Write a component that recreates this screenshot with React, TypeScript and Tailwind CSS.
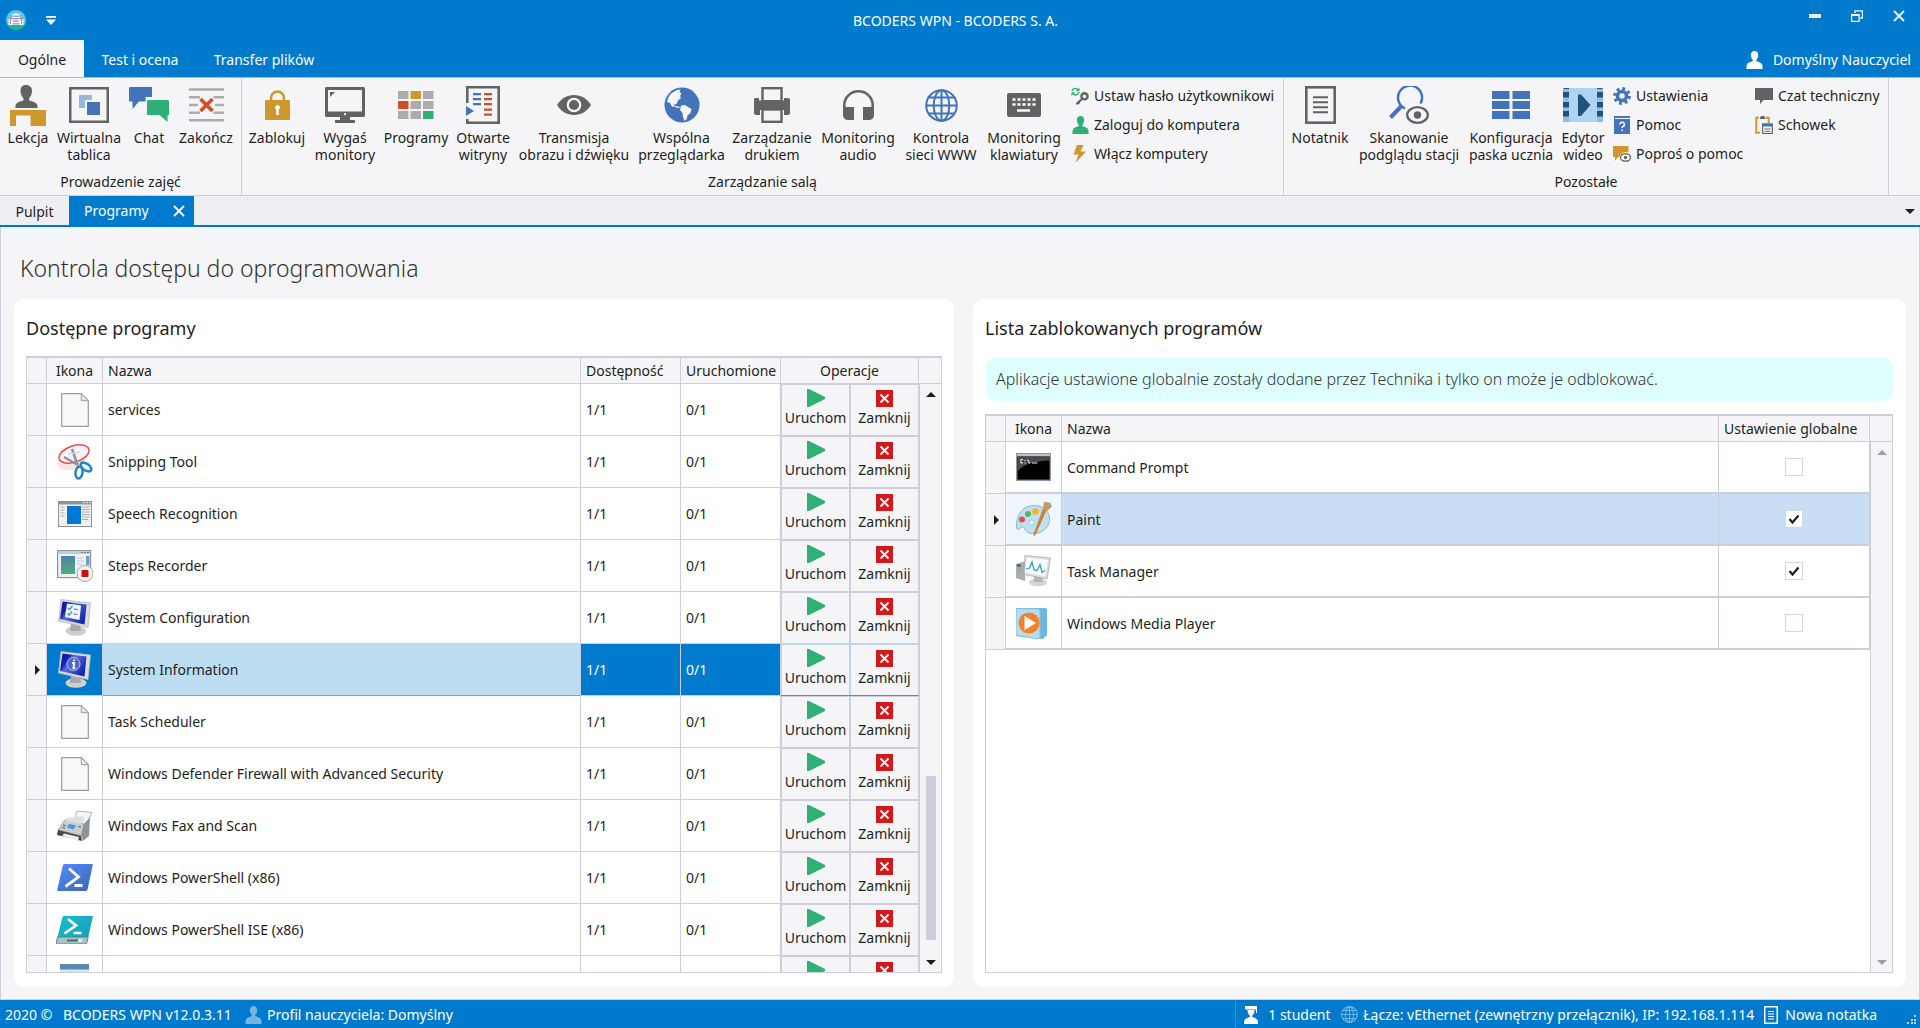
import React from "react";
import type { ReactNode } from "react";

const GRAY = "#636363";
const BLUE = "#4273bb";
const GREEN = "#2fb074";
const RED = "#d04e2c";
const GOLD = "#d0982c";

/* ---------- ribbon icons ---------- */

function LessonIcon() {
  return (
    <svg width="36" height="41" viewBox="0 0 36 41">
      <path d="M16 0c-4 0-5.500 2.500-5.500 6 0 3 1.500 6 3 7.500v2C9 16.500 5.500 18 5.500 21v2h22v-2c0-3-4-4.500-8.500-5.500v-2c1.500-1.500 3-4.500 3-7.500 0-3.500-2-6-6-6z" fill={GRAY} />
      <path d="M13.500 14.500 16.500 19l3-4.500" fill={GRAY} />
      <path d="M0 25h36v16H20.500V30.500H6V41H0z" fill={GOLD} />
    </svg>
  );
}
function BoardIcon() {
  return (
    <svg width="40" height="36" viewBox="0 0 40 36">
      <rect x="1.250" y="1.250" width="37.500" height="33.500" fill="none" stroke={GRAY} strokeWidth="2.500" />
      <path d="M10 8h13v5h-7v8h-6z" fill="#9bb5dc" />
      <rect x="18" y="15" width="13" height="13" fill={BLUE} />
    </svg>
  );
}
function ChatIcon() {
  return (
    <svg width="40" height="36" viewBox="0 0 40 36">
      <path d="M1 0h22v10h-6.500v4.500H10L3.500 22v-7.500H0V1z" fill={BLUE} />
      <path d="M19 13h20l1 1v14h-1.500v7l-8-7H18V14z" fill={GREEN} />
    </svg>
  );
}
function EndIcon() {
  return (
    <svg width="35" height="34" viewBox="0 0 35 34">
      <path d="M0 1.500h35M0 9.200h11M24.500 9.200h10.500M0 17h9M26 17h9M0 24.700h11M24.500 24.700h10.500M0 32.200h35" stroke="#acacac" strokeWidth="2.400" fill="none" />
      <path d="m11.500 11 12 12M23.500 11l-12 12" stroke={RED} strokeWidth="3.600" fill="none" />
    </svg>
  );
}
function LockIcon() {
  return (
    <svg width="25" height="30" viewBox="0 0 25 30">
      <path d="M6 11V8a6.500 6.500 0 0 1 13 0v3" fill="none" stroke={GOLD} strokeWidth="2.500" />
      <rect y="10" width="25" height="20" rx="1" fill={GOLD} />
      <path d="M12.500 15a2.500 2.500 0 0 0-1.300 4.600V25h2.600v-5.400A2.500 2.500 0 0 0 12.500 15z" fill="#fff" />
    </svg>
  );
}
function MonitorIcon() {
  return (
    <svg width="40" height="36" viewBox="0 0 40 36">
      <path fillRule="evenodd" d="M1 0h38l1 1v28l-1 1H1l-1-1V1zM3 3v21.500h34V3z" fill={GRAY} />
      <path d="M5 5h5L5 10z" fill={GRAY} />
      <path d="M15 30h10v3h5v3H10v-3h5z" fill={GRAY} />
      <circle cx="20" cy="27.200" r="1.100" fill="#fff" />
    </svg>
  );
}
function ProgramsIcon() {
  const cells = ["#acacac", GOLD, "#acacac", RED, "#acacac", "#acacac", "#acacac", "#acacac", GREEN];
  return (
    <svg width="36" height="28" viewBox="0 0 36 28">
      {cells.map((c, i) => (
        <rect key={i} x={(i % 3) * 12.500} y={Math.floor(i / 3) * 10} width="10.500" height="8" fill={c} />
      ))}
    </svg>
  );
}
function SitesIcon() {
  return (
    <svg width="34" height="38" viewBox="0 0 34 38">
      <path d="M1.300 17V1.300h31.400v35.400H1.300V33" fill="none" stroke={GRAY} strokeWidth="2.600" />
      <path d="M0 20l8 5-8 5z" fill={BLUE} />
      <path d="M7 8.200h8M7 13.200h8M7 18.200h8" stroke={BLUE} strokeWidth="2.300" />
      <path d="M18 8.200h8M18 13.200h8M18 18.200h8M18 23.700h8M18 28.700h8" stroke={RED} strokeWidth="2.300" />
    </svg>
  );
}
function EyeIcon() {
  return (
    <svg width="34" height="20" viewBox="0 0 34 20">
      <path d="M0 10C4 3.500 10 0 17 0s13 3.500 17 10c-4 6.500-10 10-17 10S4 16.500 0 10z" fill={GRAY} />
      <circle cx="17" cy="10" r="6.200" fill="none" stroke="#f5f5f7" strokeWidth="2.200" />
    </svg>
  );
}
function EarthIcon() {
  return (
    <svg width="36" height="36" viewBox="0 0 36 36">
      <circle cx="18" cy="18" r="17.500" fill={BLUE} />
      <path d="M7 6.500 13 3l3.500-.5-1 2.500 2 1.500-1.500 2.500 1 2-3 2.500-1.500 3.500-2.500.5.500 2.500-2.500-.5-2-3.500L3 15c.5-3 2-6 4-8.500z" fill="#f5f5f7" />
      <path d="M17 18.500l4-.5 3 2 3.500 2-1 4-3 2.500-1 4-2 1.500-1.500-4-.5-4-2.500-3z" fill="#f5f5f7" />
      <path d="M10 18.500l4 1 2 .5-1 1-3-.5z" fill="#f5f5f7" />
    </svg>
  );
}
function PrinterIcon() {
  return (
    <svg width="36" height="36" viewBox="0 0 36 36">
      <path d="M1 11h4v3h25v-3h4l2 1v15l-2 1h-4v-5H6v5H2l-2-1V12z" fill={GRAY} />
      <rect x="8.500" y="1.200" width="19" height="13" fill="#f5f5f7" stroke={GRAY} strokeWidth="2.400" />
      <rect x="5" y="13.500" width="26" height="9.500" fill={GRAY} />
      <rect x="8.500" y="22.500" width="19" height="12.300" fill="#f5f5f7" stroke={GRAY} strokeWidth="2.400" />
    </svg>
  );
}
function HeadphonesIcon() {
  return (
    <svg width="31" height="30" viewBox="0 0 31 30">
      <path d="M1.300 20v-5a14.200 13.700 0 0 1 28.400 0v5" fill="none" stroke={GRAY} strokeWidth="2.600" />
      <path d="M0 17h11v13H6c-4 0-6-2-6-5zM20 17h11v8c0 3-2 5-6 5h-5z" fill={GRAY} />
    </svg>
  );
}
function WebIcon({ size = 33, color = BLUE, stroke = 2 }: { size?: number; color?: string; stroke?: number }) {
  return (
    <svg width={size} height={size} viewBox="0 0 33 33" fill="none" stroke={color} strokeWidth={stroke}>
      <circle cx="16.500" cy="16.500" r="15.300" />
      <ellipse cx="16.500" cy="16.500" rx="7.800" ry="15.300" />
      <path d="M16.500 1v31M1 16.500h31M4 8.500h25M4 24.500h25" />
    </svg>
  );
}
function KeyboardIcon() {
  return (
    <svg width="34" height="24" viewBox="0 0 34 24">
      <rect width="34" height="24" rx="2" fill={GRAY} />
      <path d="M5.500 6.500h23M5.500 11.500h23" stroke="#fff" strokeWidth="2.600" strokeDasharray="3 2" />
      <path d="M10 17.500h13" stroke="#fff" strokeWidth="2.400" />
    </svg>
  );
}
function NotepadIcon() {
  return (
    <svg width="31" height="38" viewBox="0 0 31 38">
      <rect x="1.300" y="1.300" width="28.400" height="35.400" fill="none" stroke={GRAY} strokeWidth="2.600" />
      <path d="M8 11.200h15M8 16.200h15M8 21.200h15M8 26.200h15" stroke={GRAY} strokeWidth="2" />
    </svg>
  );
}
function ScanIcon() {
  return (
    <svg width="40" height="38" viewBox="0 0 40 38">
      <path d="M31.500 17.500A12 12 0 1 0 16 22.500" fill="none" stroke={BLUE} strokeWidth="2.500" />
      <path d="M12.500 20 1.500 31.500" stroke={BLUE} strokeWidth="4" />
      <ellipse cx="28.500" cy="29" rx="10.300" ry="7.800" fill="none" stroke={GRAY} strokeWidth="2.300" />
      <circle cx="28.500" cy="29" r="3.700" fill={GRAY} />
    </svg>
  );
}
function BarConfigIcon() {
  return (
    <svg width="38" height="28" viewBox="0 0 38 28">
      <path d="M0 0h17.500v8H0zM20.500 0H38v8H20.500zM0 10h17.500v8H0zM20.500 10H38v8H20.500zM0 20h17.500v8H0zM20.500 20H38v8H20.500z" fill={BLUE} />
    </svg>
  );
}
function VideoIcon() {
  return (
    <svg width="40" height="34" viewBox="0 0 40 34">
      <rect width="40" height="34" rx="1.500" fill="#b0d3f1" />
      <path d="M0 0h6v34H0zM34 0h6v34h-6z" fill="#8fbde3" />
      <path d="M0 4h6v5.500H0zM0 14h6v5.500H0zM0 23h6v5.500H0zM34 4h6v5.500h-6zM34 14h6v5.500h-6zM34 23h6v5.500h-6zM1.500 0H6v1H0zM34 0h4.500L40 1h-6z" fill="#22527d" />
      <path d="M15 6.500h3L27.500 17 18 28h-3z" fill="#22527d" />
    </svg>
  );
}
function PersonIcon({ color = GREEN }: { color?: string }) {
  return (
    <svg width="17" height="18" viewBox="0 0 17 18">
      <path d="M8.500 0C6 0 4.800 1.700 4.800 4c0 2 1 4 2 5v1L3 11.500C1 12.300.5 14 .5 16v2h16v-2c0-2-.5-3.700-2.500-4.500L10.200 10V9c1-1 2-3 2-5 0-2.300-1.200-4-3.700-4z" fill={color} />
    </svg>
  );
}
function KeyIcon() {
  return (
    <svg width="18" height="18" viewBox="0 0 18 18">
      <path d="M1 4a3.300 3.300 0 0 1 6-1M8 5a3.300 3.300 0 0 1-6 1.500" fill="none" stroke={GREEN} strokeWidth="1.500" />
      <path d="M8.500.5v3.700H5zM.5 9V5.300H4z" fill={GREEN} />
      <circle cx="13.500" cy="9.300" r="3.100" fill="none" stroke={GRAY} strokeWidth="2.400" />
      <path d="M11.300 11.500 5.500 17.200M6.500 14.500l2 2" stroke={GRAY} strokeWidth="2.200" />
    </svg>
  );
}
function BoltIcon() {
  return (
    <svg width="18" height="18" viewBox="0 0 18 18">
      <path d="M6 0h6.500L9.500 6.500H15L4.500 18l3-8.500H2.500z" fill={GOLD} />
    </svg>
  );
}
function GearIcon() {
  return (
    <svg width="18" height="18" viewBox="0 0 18 18">
      <circle cx="9" cy="9" r="7.300" fill="none" stroke={BLUE} strokeWidth="3.200" strokeDasharray="2.870 2.870" />
      <circle cx="9" cy="9" r="4.500" fill="none" stroke={BLUE} strokeWidth="3.600" />
    </svg>
  );
}
function HelpIcon() {
  return (
    <svg width="18" height="18" viewBox="0 0 18 18">
      <path d="M1 0h16v2H2v1h15v15H1z" fill={BLUE} />
      <path d="M7 8.500a2.200 2.200 0 1 1 3 2c-.7.300-.8.700-.8 1.500M9.200 13.500v1.500" fill="none" stroke="#fff" strokeWidth="1.500" />
    </svg>
  );
}
function AskIcon() {
  return (
    <svg width="18" height="16" viewBox="0 0 18 16">
      <path d="M0 0h15.500v6.500C11 5.500 7.500 7 6 11H5l-3 4v-4H0z" fill={GOLD} />
      <ellipse cx="12.500" cy="11.500" rx="5" ry="3.700" fill="#fff" stroke={GRAY} strokeWidth="1.300" />
      <circle cx="12.500" cy="11.500" r="1.700" fill={GRAY} />
    </svg>
  );
}
function TechChatIcon() {
  return (
    <svg width="18" height="16" viewBox="0 0 18 16">
      <path d="M0 0h18v12H8.500L5 16v-4H0z" fill={GRAY} />
    </svg>
  );
}
function ClipboardIcon() {
  return (
    <svg width="18" height="18" viewBox="0 0 18 18">
      <path d="M4 1.800H1.300v15H5M11 1.800h2.700V7" fill="none" stroke={GOLD} strokeWidth="2" />
      <path d="M5 3V1.300L6.500 0h2.300L10.300 1.300V3z" fill={GRAY} />
      <rect x="7.700" y="8.200" width="9.600" height="9.300" fill="#fff" stroke={GRAY} strokeWidth="1.200" />
      <path d="M7 7.500h11v3H7z" fill={BLUE} />
      <path d="M9.500 13h6M9.500 15.300h6" stroke={GRAY} />
    </svg>
  );
}
function StudentIcon() {
  return (
    <svg width="16" height="18" viewBox="0 0 16 18">
      <path d="M2 0h12v3.500H2zM13 0h1v7h-1zM4.500 4h7c0 3-1 4.500-2.500 6v.8l3.500 1.400c1.800.8 2.500 2.300 2.500 4V18H1v-1.800c0-1.700.7-3.200 2.500-4L7 10.800V10C5.500 8.500 4.500 7 4.500 4z" fill="#fff" />
    </svg>
  );
}
function NoteIcon() {
  return (
    <svg width="14" height="18" viewBox="0 0 14 18">
      <rect x=".75" y=".75" width="12.500" height="16.500" fill="none" stroke="#fff" strokeWidth="1.500" />
      <path d="M4 5.500h6M4 8h6M4 10.500h6M4 13h6" stroke="#fff" />
    </svg>
  );
}
function AppLogo() {
  return (
    <svg width="20" height="20" viewBox="0 0 20 20">
      <circle cx="10" cy="10" r="10" fill="#4fd0f0" />
      <path d="M1.300 15a10 10 0 0 0 17.400 0z" fill="#1fb58f" />
      <path d="M6.500 4.500 10 3l3.500 1.500V15h-7zM2.500 8.500h4V15h-4zM13.500 8.500h4V15h-4z" fill="#eef2fb" />
      <path d="M8 5.500v9M10 5.500v9M12 5.500v9M4.500 9.500v5M15.500 9.500v5" stroke="#4b63a8" strokeDasharray="1.500 1" />
      <path d="M10 1v2M2.500 8.500h4M13.500 8.500h4" stroke="#e06a5c" />
    </svg>
  );
}

/* ---------- program icons ---------- */

function FileIcon() {
  return (
    <svg width="28" height="34" viewBox="0 0 28 34">
      <path d="M.7.700h19.600l7 7v25.600H.7z" fill="#f8f9fa" stroke="#9b9b9b" strokeWidth="1.200" />
      <path d="M20.300.7v7h7z" fill="#e8e9ea" stroke="#9b9b9b" />
    </svg>
  );
}
function SnippingIcon() {
  return (
    <svg width="36" height="36" viewBox="0 0 36 36">
      <ellipse cx="14" cy="18" rx="14" ry="8" fill="#fbe3e3" transform="rotate(-10 14 18)" />
      <ellipse cx="17" cy="10" rx="15.500" ry="8.200" fill="#f5f5f7" stroke="#ef4b4b" strokeWidth="1.500" transform="rotate(-18 17 10)" />
      <path d="M15 5 20.500 21M7 13l14 8" stroke="#8d9499" strokeWidth="2.500" />
      <path d="M11 10l12-2" stroke="#d4d8da" strokeWidth="1.500" />
      <ellipse cx="22" cy="28.500" rx="3.500" ry="6" fill="none" stroke="#1e86c8" strokeWidth="2.500" transform="rotate(8 22 28.500)" />
      <ellipse cx="29" cy="23" rx="3.300" ry="6" fill="none" stroke="#1e86c8" strokeWidth="2.500" transform="rotate(-55 29 23)" />
    </svg>
  );
}
function SpeechIcon() {
  return (
    <svg width="34" height="26" viewBox="0 0 34 26">
      <rect x=".5" y=".5" width="33" height="25" fill="#f1f1f1" stroke="#8f9396" />
      <path d="M0 0h34v3.500H0z" fill="#8f9396" />
      <path d="M25 1.700h2M28 1.700h2M31 1.700h2" stroke="#e8e8e8" />
      <path d="M2.500 6h4M2.500 9h4M2.500 12h4M2.500 15h4M24 6h8M24 8.500h8M24 11h8M24 13.500h8M24 16h8M24 18.500h6" stroke="#a9adb0" />
      <rect x="9" y="5" width="14" height="18" fill="#0078d7" />
    </svg>
  );
}
function StepsIcon() {
  return (
    <svg width="36" height="32" viewBox="0 0 36 32">
      <defs>
        <linearGradient id="stepsScreen" x1="0" y1="0" x2="0" y2="1">
          <stop offset="0" stopColor="#4b86a8" />
          <stop offset="1" stopColor="#4fae7c" />
        </linearGradient>
      </defs>
      <rect x=".6" y=".6" width="33" height="27" fill="#eef2f4" stroke="#8b979e" strokeWidth="1.200" />
      <path d="M1 1h32v3H1z" fill="#c2ccd2" />
      <path d="M24 2.500h9" stroke="#6d7980" strokeDasharray="2 1" />
      <rect x="4" y="6" width="14" height="18" fill="url(#stepsScreen)" />
      <path d="M20 8h7M20 11h7M20 14h6" stroke="#c3cace" />
      <rect x="29" y="6" width="3.500" height="9" fill="#6b9dbd" />
      <circle cx="28" cy="23.500" r="8" fill="#f3f3f3" stroke="#a5a5a5" />
      <rect x="24.500" y="20" width="7" height="7" rx="1" fill="#d40f0f" />
    </svg>
  );
}
function ScreenIcon({ info }: { info?: boolean }) {
  const id = info ? "crtInfo" : "crtConf";
  return (
    <svg width="36" height="38" viewBox="0 0 36 38">
      <defs>
        <linearGradient id={id} x1="0" y1="0" x2="1" y2=".6">
          <stop offset="0" stopColor="#0a1899" />
          <stop offset=".3" stopColor="#1122b5" />
          <stop offset=".45" stopColor="#5b71dc" />
          <stop offset="1" stopColor="#1226b0" />
        </linearGradient>
      </defs>
      <ellipse cx="19" cy="32" rx="10.500" ry="4.800" fill="#cfcfd0" />
      <path d="M14 24h9l1 8H13z" fill="#a9a9ab" />
      <path d="M4 .5 33.500 4 31 28.500 1.500 22z" fill="#dcdcdc" stroke="#b9b9bb" strokeWidth=".8" />
      <path d="M5.500 2.500 29.500 5.500 27.500 25.500 3 20z" fill={`url(#${id})`} />
      {info ? (
        <>
          <circle cx="16.500" cy="13" r="6.500" fill="#4f68c9" stroke="#b7c3ee" />
          <path d="M15 12h2.200l-.8 5h2M17 8.500v1.500" fill="none" stroke="#fff" strokeWidth="1.800" />
        </>
      ) : (
        <>
          <path d="M10 4.500 24 6.500 22.500 21 8 18z" fill="#f3f6fc" />
          <path d="m11 9 1.500 1.500 3-3.500M10.500 14.500 12 16l3-3.500" fill="none" stroke="#3fa2cc" strokeWidth="1.600" />
          <path d="m17 10 4 .7M16.500 15l4 .7" stroke="#8a8fb5" strokeWidth="1.300" />
        </>
      )}
    </svg>
  );
}
function FaxIcon() {
  return (
    <svg width="36" height="32" viewBox="0 0 36 32">
      <path d="M20 1 35 2.500 29 16 17 12z" fill="#f4f5f6" stroke="#9ea3a6" strokeWidth=".8" />
      <path d="M8 10 27 14l-2 12L1 20z" fill="#c9ced2" stroke="#8a9094" strokeWidth=".8" />
      <path d="M27 14l6-7-1 19-6 5-2-6z" fill="#8d9397" />
      <path d="M9 8 26 6l2 4-4 4-15-3z" fill="#dde0e2" />
      <path d="m12 14 7 1.500-2.500 4L10 17.500z" fill="#4799d8" />
      <path d="m6 15 3 .7M5 17.500l3 .7M21 16.500l3 .7" stroke="#6a7074" strokeWidth="1.200" />
      <path d="M1 20 24 26l1 5L0 25z" fill="#44494c" />
      <path d="M7 23.500 22 27l-1 4L5 26z" fill="#eceded" />
    </svg>
  );
}
function PowerShellIcon() {
  return (
    <svg width="36" height="27" viewBox="0 0 36 27">
      <defs>
        <linearGradient id="psFill" x1="0" y1="0" x2="1" y2="1">
          <stop offset="0" stopColor="#4f8dff" />
          <stop offset="1" stopColor="#3d66b4" />
        </linearGradient>
      </defs>
      <path d="M7.500 0H35q1 0 .8 1L30.500 25.500q-.4 1.500-1.500 1.500H1q-1 0-.8-1L5.800 1.500Q6.200 0 7.500 0z" fill="url(#psFill)" />
      <path d="M12 4.500 21.500 13 8.500 22.500M17.500 21.500h8" fill="none" stroke="#fff" strokeWidth="2.800" />
    </svg>
  );
}
function PowerShellIseIcon() {
  return (
    <svg width="37" height="28" viewBox="0 0 37 28">
      <defs>
        <linearGradient id="iseFill" x1="0" y1="0" x2="1" y2="1">
          <stop offset="0" stopColor="#14bfd6" />
          <stop offset="1" stopColor="#159bb0" />
        </linearGradient>
      </defs>
      <path d="M8 0h28q1 0 .8 1L31 26.500q-.4 1.500-1.500 1.500H1q-1 0-.8-1L6.300 1.500Q6.700 0 8 0z" fill="url(#iseFill)" />
      <path d="M1.500 21h30.700L31 26.500q-.4 1.500-1.500 1.500H1q-1 0-.8-1z" fill="#a9c2c4" stroke="#55787d" strokeWidth=".8" />
      <path d="M11 24.500h13" stroke="#4c6a6e" strokeWidth="2" />
      <rect x="22" y="23" width="4" height="3" fill="#dfe9ea" />
      <path d="M12 3 20 9.500 8.500 17.500M17.500 17h8" fill="none" stroke="#fff" strokeWidth="2.700" />
    </svg>
  );
}
function CalendarIcon() {
  return (
    <svg width="29" height="36" viewBox="0 0 29 36">
      <rect width="29" height="36" fill="#d5e7f6" />
      <path d="M0 0h29v5.500H0z" fill="#5b88b2" />
      <circle cx="10" cy="9" r="1.500" fill="#f08b3c" />
    </svg>
  );
}
function CommandIcon() {
  return (
    <svg width="35" height="28" viewBox="0 0 35 28">
      <rect x=".7" y=".7" width="33.600" height="26.600" fill="#000" stroke="#8d959c" strokeWidth="1.400" />
      <path d="M1 1h33v2.500H1z" fill="#b9c3cc" />
      <path d="M1.400 3.500h32.200v4C20 8 6 11 1.400 19z" fill="#4a4a4a" />
      <path d="M7 6.500H5v3.500h2M9 7v1M9 9.500v1M11.500 6.500l2.500 4M16 10h5.500" fill="none" stroke="#e9e9e9" strokeWidth="1.100" />
    </svg>
  );
}
function PaintIcon() {
  return (
    <svg width="36" height="36" viewBox="0 0 36 36">
      <path d="M14 5C5 7 0 15 .5 27c.2 1.500 2.500 1.500 4 0s4-1.500 4.500 1 3 4.500 8 4.500c11 0 17.500-8 16.500-16C32.500 8 24 3 14 5z" fill="#bfe0f3" stroke="#88b7d6" />
      <circle cx="15.500" cy="21.500" r="2.600" fill="#f1f7fd" stroke="#88b7d6" strokeWidth=".8" />
      <circle cx="6" cy="18.500" r="3" fill="#e25348" />
      <circle cx="12" cy="13" r="3" fill="#58b559" />
      <circle cx="19.500" cy="10.500" r="3.300" fill="#f3b424" />
      <path d="M30.500 8.500 19.500 33l-1.500 2 .3-3L27.500 7z" fill="#e07f2a" stroke="#b9621a" strokeWidth=".5" />
      <path d="M27 8.500 28 1l6 .5 2 4-5 4.500z" fill="#c29a68" />
    </svg>
  );
}
function TaskManagerIcon() {
  return (
    <svg width="35" height="32" viewBox="0 0 35 32">
      <path d="M0 9 9 6v20L0 23z" fill="#a9adaf" />
      <path d="M1 9.500h4v2H1z" fill="#4d5558" />
      <path d="M2 12.500h2v2H2z" fill="#69c234" />
      <ellipse cx="22" cy="27.500" rx="9" ry="3.800" fill="#d4d5d6" />
      <path d="M18 21h8l1 6h-9z" fill="#b3b5b6" />
      <path d="M9 .5 34.500 3 31 24 8 19.500z" fill="#dfe0e1" stroke="#a7aaac" strokeWidth=".8" />
      <path d="M10.500 3 32 5l-3 16-19.500-3.500z" fill="#f7fbfe" />
      <path d="M10 14 13.500 13l2.500-6 2 8 3 .5 3-6 2 8 3-2" fill="none" stroke="#3b9ad0" strokeWidth="1.300" />
    </svg>
  );
}
function MediaPlayerIcon() {
  return (
    <svg width="35" height="31" viewBox="0 0 35 31">
      <path d="M1 0h28l2 1v26l-4 4L1 28z" fill="#6fb4dc" />
      <path d="M0 .5 24 1v30L0 27.500z" fill="#b5ddf2" stroke="#85bfdf" />
      <circle cx="13" cy="15" r="10.500" fill="#f5822a" />
      <path d="M8.500 8v14L20 15z" fill="#fff" />
    </svg>
  );
}

/* ---------- ribbon ---------- */

type BigProps = { icon: ReactNode; lines: string[]; width: string };

function BigButton({ icon, lines, width }: BigProps) {
  return (
    <button type="button" className={`flex shrink-0 flex-col items-center pt-[3px] whitespace-nowrap ${width}`}>
      <span className="mb-[3px] flex h-[42px] items-center justify-center">{icon}</span>
      {lines.map((l) => (
        <span key={l} className="leading-[17px]">{l}</span>
      ))}
    </button>
  );
}
function SmallButton({ icon, label }: { icon: ReactNode; label: string }) {
  return (
    <button type="button" className="flex h-[29px] items-center gap-[5px] whitespace-nowrap">
      <span className="flex w-[18px] justify-center">{icon}</span>
      <span>{label}</span>
    </button>
  );
}
function RibbonGroup({ label, width, children }: { label: string; width: string; children: ReactNode }) {
  return (
    <section aria-label={label} className={`flex shrink-0 flex-col justify-between border-r border-[#cccedb] ${width}`}>
      <div className="flex items-start pt-[3px] pl-[2px]">{children}</div>
      <div className="pb-[3px] text-center leading-[20px]">{label}</div>
    </section>
  );
}

function Ribbon() {
  return (
    <div className="flex h-[119px] shrink-0 border-t border-b border-t-[#8fc5ea] border-b-[#cccedb] bg-[#f5f5f7]">
      <RibbonGroup label="Prowadzenie zajęć" width="w-[242px]">
        <BigButton width="w-[52px]" icon={<LessonIcon />} lines={["Lekcja"]} />
        <BigButton width="w-[70px]" icon={<BoardIcon />} lines={["Wirtualna", "tablica"]} />
        <BigButton width="w-[50px]" icon={<ChatIcon />} lines={["Chat"]} />
        <BigButton width="w-[64px]" icon={<EndIcon />} lines={["Zakończ"]} />
      </RibbonGroup>
      <RibbonGroup label="Zarządzanie salą" width="w-[1042px]">
        <BigButton width="w-[66px]" icon={<LockIcon />} lines={["Zablokuj"]} />
        <BigButton width="w-[70px]" icon={<MonitorIcon />} lines={["Wygaś", "monitory"]} />
        <BigButton width="w-[72px]" icon={<ProgramsIcon />} lines={["Programy"]} />
        <BigButton width="w-[62px]" icon={<SitesIcon />} lines={["Otwarte", "witryny"]} />
        <BigButton width="w-[120px]" icon={<EyeIcon />} lines={["Transmisja", "obrazu i dźwięku"]} />
        <BigButton width="w-[95px]" icon={<EarthIcon />} lines={["Wspólna", "przeglądarka"]} />
        <BigButton width="w-[86px]" icon={<PrinterIcon />} lines={["Zarządzanie", "drukiem"]} />
        <BigButton width="w-[86px]" icon={<HeadphonesIcon />} lines={["Monitoring", "audio"]} />
        <BigButton width="w-[80px]" icon={<WebIcon />} lines={["Kontrola", "sieci WWW"]} />
        <BigButton width="w-[86px]" icon={<KeyboardIcon />} lines={["Monitoring", "klawiatury"]} />
        <div className="flex flex-col pl-1">
          <SmallButton icon={<KeyIcon />} label="Ustaw hasło użytkownikowi" />
          <SmallButton icon={<PersonIcon />} label="Zaloguj do komputera" />
          <SmallButton icon={<BoltIcon />} label="Włącz komputery" />
        </div>
      </RibbonGroup>
      <RibbonGroup label="Pozostałe" width="w-[605px]">
        <BigButton width="w-[68px]" icon={<NotepadIcon />} lines={["Notatnik"]} />
        <BigButton width="w-[110px]" icon={<ScanIcon />} lines={["Skanowanie", "podglądu stacji"]} />
        <BigButton width="w-[94px]" icon={<BarConfigIcon />} lines={["Konfiguracja", "paska ucznia"]} />
        <BigButton width="w-[50px]" icon={<VideoIcon />} lines={["Edytor", "wideo"]} />
        <div className="flex w-[147px] flex-col pl-[5px]">
          <SmallButton icon={<GearIcon />} label="Ustawienia" />
          <SmallButton icon={<HelpIcon />} label="Pomoc" />
          <SmallButton icon={<AskIcon />} label="Poproś o pomoc" />
        </div>
        <div className="flex flex-col">
          <SmallButton icon={<TechChatIcon />} label="Czat techniczny" />
          <SmallButton icon={<ClipboardIcon />} label="Schowek" />
        </div>
      </RibbonGroup>
    </div>
  );
}

/* ---------- header ---------- */

function TitleBar() {
  return (
    <header className="shrink-0 bg-[#007acc] text-white">
      <div className="grid h-10 grid-cols-3 items-center pr-[15px] pl-[6px]">
        <div className="flex items-center gap-5">
          <AppLogo />
          <button type="button" aria-label="Dostosuj pasek">
            <svg width="10" height="9" viewBox="0 0 10 9"><path d="M0 0h10v1.800H0zM0 3.500h10L5 9z" fill="#fff" /></svg>
          </button>
        </div>
        <h1 className="text-center text-[14px]">BCODERS WPN - BCODERS S. A.</h1>
        <div className="flex h-full items-start justify-end gap-[30px] pt-[10px]">
          <button type="button" aria-label="Minimalizuj" className="flex h-3 items-center">
            <svg width="12" height="4" viewBox="0 0 12 4"><path d="M0 0h12v4H0z" fill="#f0f0f4" /></svg>
          </button>
          <button type="button" aria-label="Przywróć">
            <svg width="12" height="12" viewBox="0 0 12 12" fill="none" stroke="#f0f0f4"><path d="M4 3V.9h7.500V8H9" strokeWidth="1.400" /><path d="M.6 4.600h7.500v6.800H.6zM.6 5.400h7.500" strokeWidth="1.300" /></svg>
          </button>
          <button type="button" aria-label="Zamknij okno">
            <svg width="12" height="12" viewBox="0 0 12 12"><path d="m1 1 10 10M11 1 1 11" stroke="#f0f0f4" strokeWidth="1.900" /></svg>
          </button>
        </div>
      </div>
      <nav className="flex h-[37px] items-stretch" aria-label="Wstążka">
        <button type="button" className="w-[84px] bg-[#f5f5f7] pt-[2px] text-center text-[#1e1e1e]">Ogólne</button>
        <button type="button" className="w-[112px] pt-[2px] text-center">Test i ocena</button>
        <button type="button" className="w-[136px] pt-[2px] text-center">Transfer plików</button>
        <button type="button" className="ml-auto flex items-center gap-[10px] pt-[2px] pr-[9px]">
          <PersonIcon color="#fff" />
          Domyślny Nauczyciel
        </button>
      </nav>
    </header>
  );
}
function DocumentTabs() {
  return (
    <div className="flex h-[31px] shrink-0 items-stretch border-b-2 border-[#007acc] bg-[#eeeef2]">
      <button type="button" className="w-[69px] pt-px text-center">Pulpit</button>
      <div className="flex w-[125px] items-center justify-between bg-[#007acc] pr-[9px] pl-[15px] text-white">
        <button type="button">Programy</button>
        <button type="button" aria-label="Zamknij kartę">
          <svg width="12" height="12" viewBox="0 0 12 12"><path d="m1 1 10 10M11 1 1 11" stroke="#fff" strokeWidth="1.800" /></svg>
        </button>
      </div>
      <button type="button" aria-label="Lista kart" className="ml-auto pt-[2px] pr-[5px]">
        <svg width="10" height="5" viewBox="0 0 10 5"><path d="M0 0h10L5 5z" fill="#1e1e1e" /></svg>
      </button>
    </div>
  );
}

/* ---------- tables ---------- */

const programs: { name: string; icon: ReactNode; selected?: boolean }[] = [
  { name: "services", icon: <FileIcon /> },
  { name: "Snipping Tool", icon: <SnippingIcon /> },
  { name: "Speech Recognition", icon: <SpeechIcon /> },
  { name: "Steps Recorder", icon: <StepsIcon /> },
  { name: "System Configuration", icon: <ScreenIcon /> },
  { name: "System Information", icon: <ScreenIcon info />, selected: true },
  { name: "Task Scheduler", icon: <FileIcon /> },
  { name: "Windows Defender Firewall with Advanced Security", icon: <FileIcon /> },
  { name: "Windows Fax and Scan", icon: <FaxIcon /> },
  { name: "Windows PowerShell (x86)", icon: <PowerShellIcon /> },
  { name: "Windows PowerShell ISE (x86)", icon: <PowerShellIseIcon /> },
];

const blocked: { name: string; icon: ReactNode; global: boolean; selected?: boolean }[] = [
  { name: "Command Prompt", icon: <CommandIcon />, global: false },
  { name: "Paint", icon: <PaintIcon />, global: true, selected: true },
  { name: "Task Manager", icon: <TaskManagerIcon />, global: true },
  { name: "Windows Media Player", icon: <MediaPlayerIcon />, global: false },
];

function RowMarker() {
  return (
    <svg className="ml-auto mr-1.5" width="5" height="10" viewBox="0 0 5 10"><path d="M0 0l5 5-5 5z" fill="#1e1e1e" /></svg>
  );
}

function OperationButtons({ selected, name }: { selected?: boolean; name?: string }) {
  const edge = selected ? "border-[#b5d8ee]" : "border-[#cccedb]";
  return (
    <div className="flex h-full">
      <button type="button" aria-label={`Uruchom ${name ?? ""}`} className={`flex w-[70px] flex-col items-center border-t border-r-2 border-l pt-[4px] ${edge}`}>
        <svg className="shrink-0" width="18" height="18" viewBox="0 0 18 18"><path d="M0 0h2l16 8v2L2 18H0z" fill={GREEN} /></svg>
        {name && <span className="mt-px leading-[20px]">Uruchom</span>}
      </button>
      <button type="button" aria-label={`Zamknij ${name ?? ""}`} className={`flex flex-1 flex-col items-center border-t pt-[5px] ${edge}`}>
        <svg className="shrink-0" width="17" height="17" viewBox="0 0 17 17"><path d="M0 0h17v17H0z" fill="#d2191b" /><path d="m4.500 4.500 8 8M12.500 4.500l-8 8" stroke="#fff" strokeWidth="1.900" /></svg>
        {name && <span className="mt-px leading-[20px]">Zamknij</span>}
      </button>
    </div>
  );
}

function ScrollBar({ active }: { active?: boolean }) {
  const arrow = active ? "#1e1e1e" : "#a0a0a0";
  return (
    <div className="flex w-[22px] shrink-0 flex-col bg-[#f5f5f7]">
      <div className="h-[26px] shrink-0 border-b border-[#cccedb]" />
      <div className="flex flex-1 flex-col items-center border-l border-[#cccedb] pt-2 pb-[7px]">
        <svg width="10" height="5" viewBox="0 0 10 5"><path d="M0 5h10L5 0z" fill={arrow} /></svg>
        <div className="flex-1" />
        {active && <div className="mb-5 h-[164px] w-[10px] bg-[#cccedb]" />}
        <svg width="10" height="5" viewBox="0 0 10 5"><path d="M0 0h10L5 5z" fill={arrow} /></svg>
      </div>
    </div>
  );
}

const th = "h-[26px] border-r border-b border-[#cccedb] bg-[#f5f5f7] p-0 font-normal";
const cell = "h-[52px] border-r border-b border-[#cccedb] p-0";
const iconBox = "flex items-center justify-center";

function AvailablePrograms() {
  return (
    <section className="flex min-w-0 flex-col rounded-[10px] bg-white px-3 pb-[14px]">
      <h2 className="flex h-[57px] shrink-0 items-center pt-[2px] text-[18px]">Dostępne programy</h2>
      <div className="flex min-h-0 flex-1 overflow-hidden border border-t-2 border-[#cccedb]">
        <div className="min-w-0 flex-1 overflow-hidden">
          <table className="w-full table-fixed border-separate border-spacing-0">
            <colgroup>
              <col className="w-[20px]" />
              <col className="w-[56px]" />
              <col />
              <col className="w-[100px]" />
              <col className="w-[100px]" />
              <col className="w-[138px]" />
            </colgroup>
            <thead>
              <tr>
                <th className={th} />
                <th className={th}>Ikona</th>
                <th className={`${th} pl-[5px] text-left`}>Nazwa</th>
                <th className={`${th} pl-[5px] text-left`}>Dostępność</th>
                <th className={`${th} pl-[5px] text-left`}>Uruchomione</th>
                <th className={th}>Operacje</th>
              </tr>
            </thead>
            <tbody>
              {programs.map((p) => (
                <tr key={p.name} className={p.selected ? "text-white" : ""}>
                  <td className={`${cell} bg-[#f5f5f7]`}>{p.selected && <RowMarker />}</td>
                  <td className={`${cell} ${p.selected ? "bg-[#007acc]" : ""}`}><div className={iconBox}>{p.icon}</div></td>
                  <td className={`${cell} pl-[5px] text-[#1e1e1e] ${p.selected ? "border-b-[#5aaae4] bg-[#bdddf2]" : ""}`}>{p.name}</td>
                  <td className={`${cell} pl-[5px] ${p.selected ? "bg-[#007acc]" : ""}`}>1/1</td>
                  <td className={`${cell} pl-[5px] ${p.selected ? "bg-[#007acc]" : ""}`}>0/1</td>
                  <td className={`${cell} bg-[#f5f5f7] text-[#1e1e1e] ${p.selected ? "border-b-[#3b95d6]" : ""}`}>
                    <div className="h-[51px]"><OperationButtons selected={p.selected} name={p.name} /></div>
                  </td>
                </tr>
              ))}
              <tr>
                <td className={`${cell} bg-[#f5f5f7]`} />
                <td className={cell}><div className={iconBox}><CalendarIcon /></div></td>
                <td className={cell} />
                <td className={cell} />
                <td className={cell} />
                <td className={`${cell} bg-[#f5f5f7]`}><div className="h-[51px]"><OperationButtons /></div></td>
              </tr>
            </tbody>
          </table>
        </div>
        <ScrollBar active />
      </div>
    </section>
  );
}

function GlobalCheck({ name, checked }: { name: string; checked: boolean }) {
  return (
    <label className="relative mx-auto block size-[18px]">
      <input type="checkbox" aria-label={`Ustawienie globalne: ${name}`} defaultChecked={checked} className="peer block size-[18px] appearance-none border border-[#d3d5e0] bg-white" />
      <svg className="pointer-events-none absolute inset-0 hidden peer-checked:block" width="18" height="18" viewBox="0 0 18 18">
        <path d="m4.500 9 3 3.500 6-7" fill="none" stroke="#1e1e1e" strokeWidth="2.200" />
      </svg>
    </label>
  );
}

function BlockedPrograms() {
  return (
    <section className="flex min-w-0 flex-col rounded-[10px] bg-white pr-[13px] pb-[14px] pl-3">
      <h2 className="flex h-[58px] shrink-0 items-center text-[18px]">Lista zablokowanych programów</h2>
      <p className="ml-px flex h-[44px] shrink-0 items-center rounded-[10px] bg-[#dfffff] pl-[10px] text-[16px] font-light text-[#333]">
        Aplikacje ustawione globalnie zostały dodane przez Technika i tylko on może je odblokować.
      </p>
      <div className="mt-[13px] flex min-h-0 flex-1 overflow-hidden border border-t-2 border-[#cccedb]">
        <div className="min-w-0 flex-1 overflow-hidden">
          <table className="w-full table-fixed border-separate border-spacing-0">
            <colgroup>
              <col className="w-[20px]" />
              <col className="w-[56px]" />
              <col />
              <col className="w-[151px]" />
            </colgroup>
            <thead>
              <tr>
                <th className={th} />
                <th className={th}>Ikona</th>
                <th className={`${th} pl-[5px] text-left`}>Nazwa</th>
                <th className={`${th} pl-[5px] text-left`}>Ustawienie globalne</th>
              </tr>
            </thead>
            <tbody>
              {blocked.map((p) => (
                <tr key={p.name}>
                  <td className={`${cell} bg-[#f5f5f7]`}>{p.selected && <RowMarker />}</td>
                  <td className={`${cell} border-b-2 ${p.selected ? "bg-[#f0f6fd]" : ""}`}><div className={iconBox}>{p.icon}</div></td>
                  <td className={`${cell} border-b-2 pl-[5px] ${p.selected ? "bg-[#c9def5]" : ""}`}>{p.name}</td>
                  <td className={`${cell} border-b-2 ${p.selected ? "bg-[#c9def5]" : ""}`}><GlobalCheck name={p.name} checked={p.global} /></td>
                </tr>
              ))}
            </tbody>
          </table>
        </div>
        <ScrollBar />
      </div>
    </section>
  );
}

/* ---------- status bar ---------- */

function StatusBar() {
  return (
    <footer className="flex h-7 shrink-0 items-stretch bg-[#007acc] pt-px text-white">
      <div className="flex items-center pl-[5px]">
        <span className="w-[58px]">2020 ©</span>
        <span className="w-[182px] whitespace-nowrap">BCODERS WPN v12.0.3.11</span>
        <span className="mr-[5px] opacity-45"><PersonIcon color="#fff" /></span>
        <span>Profil nauczyciela: Domyślny</span>
      </div>
      <div className="ml-auto flex items-center border-l border-[#2f94d8] pl-[7px] whitespace-nowrap">
        <StudentIcon />
        <span className="w-[82px] pl-[9px]">1 student</span>
        <WebIcon size={17} color="#6cb6e8" stroke={2} />
        <span className="w-[406px] pl-[5px]">Łącze: vEthernet (zewnętrzny przełącznik), IP: 192.168.1.114</span>
        <button type="button" className="flex items-center gap-[7px]">
          <NoteIcon />
          Nowa notatka
        </button>
        <span className="ml-[30px] self-end pr-[3px] pb-[3px]">
          <svg width="10" height="10" viewBox="0 0 10 10"><path d="M7 0h2v2H7zM4 4h2v2H4zM7 4h2v2H7zM0 7h2v2H0zM4 7h2v2H4zM7 7h2v2H7z" fill="#b9dcf3" /></svg>
        </span>
      </div>
    </footer>
  );
}

export default function App() {
  return (
    <div className="flex h-screen flex-col overflow-hidden bg-[#f5f5f7] font-['Noto_Sans',sans-serif] text-[14px] text-[#1e1e1e]">
      <TitleBar />
      <Ribbon />
      <DocumentTabs />
      <main className="flex min-h-0 flex-1 flex-col border border-t-0 border-[#cccedb] px-[13px] pb-3">
        <h2 className="flex h-[72px] shrink-0 items-center pt-[10px] pl-[6px] text-[23px] font-light text-[#333]">Kontrola dostępu do oprogramowania</h2>
        <div className="grid min-h-0 flex-1 grid-cols-[940fr_933fr] grid-rows-[minmax(0,1fr)] gap-[19px]">
          <AvailablePrograms />
          <BlockedPrograms />
        </div>
      </main>
      <StatusBar />
    </div>
  );
}
